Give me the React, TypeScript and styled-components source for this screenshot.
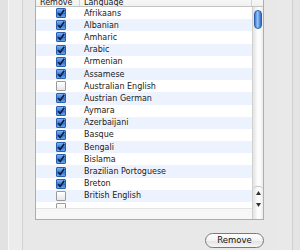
import React from 'react';
import styled, { createGlobalStyle } from 'styled-components';

const GlobalStyle = createGlobalStyle`
  html, body {
    margin: 0;
    padding: 0;
    background: #e8e8e8;
    overflow: hidden;
  }
  body {
    font-family: "DejaVu Sans", "Lucida Grande", sans-serif;
  }
`;

const Window = styled.div`
  width: 300px;
  height: 250px;
  display: flex;
  overflow: hidden;
  background: #e8e8e8;
`;

const LeftFrame = styled.div`
  width: 23px;
  display: flex;
  flex-shrink: 0;
`;

const FrameStrip = styled.div<{ $w: number; $bg: string; $line?: string }>`
  width: ${(p) => p.$w}px;
  background: ${(p) => p.$bg};
  border-right: ${(p) => (p.$line ? `1px solid ${p.$line}` : 'none')};
`;

const Main = styled.div`
  flex: 1;
  display: flex;
  flex-direction: column;
  padding: 0 14px 0 12px;
`;

const ListBox = styled.div`
  margin-top: -8px;
  height: 228px;
  box-sizing: border-box;
  border: 1px solid #9db0cb;
  background: #fff;
  display: flex;
  flex-direction: column;
  overflow: hidden;
`;

const Header = styled.div`
  height: 13px;
  flex-shrink: 0;
  display: flex;
  border-bottom: 1px solid #c4c4c4;
  background: linear-gradient(#ffffff, #f0f0f0);
  font-size: 8px;
  color: #222;
  overflow: hidden;
`;

const HeadCell = styled.div<{ $w?: number }>`
  ${(p) => (p.$w ? `width: ${p.$w}px;` : 'flex: 1;')}
  flex-shrink: 0;
  box-sizing: border-box;
  padding-left: 4px;
  padding-top: 3px;
  line-height: 13px;
  border-right: 1px solid #d4d4d4;
  white-space: nowrap;
  overflow: hidden;
`;

const Corner = styled.div`
  width: 11px;
  flex-shrink: 0;
`;

const Body = styled.div`
  flex: 1;
  display: flex;
  min-height: 0;
`;

const Rows = styled.div`
  flex: 1;
  display: flex;
  flex-direction: column;
`;

const Viewport = styled.div`
  height: 201px;
  flex-shrink: 0;
  display: flex;
  flex-direction: column;
  overflow: hidden;
`;

const Row = styled.div<{ $odd: boolean }>`
  height: 12.2px;
  flex-shrink: 0;
  display: flex;
  align-items: center;
  background: ${(p) => (p.$odd ? '#edf3fe' : '#ffffff')};
`;

const CheckCell = styled.div`
  width: 44px;
  flex-shrink: 0;
  display: flex;
  justify-content: center;
  padding-left: 6px;
  box-sizing: border-box;
`;

const Box = styled.div<{ $on: boolean }>`
  width: 10px;
  height: 10px;
  box-sizing: border-box;
  border-radius: 1px;
  border: 1px solid ${(p) => (p.$on ? '#2a5fb0' : '#9a9a9a')};
  background: ${(p) =>
    p.$on
      ? 'linear-gradient(#7fb2f0, #3a7cd8 50%, #2c6ccc 51%, #6aa6ec)'
      : 'linear-gradient(#ffffff, #e6e6e6)'};
  display: flex;
  align-items: center;
  justify-content: center;
`;

const LangCell = styled.div`
  flex: 1;
  padding-left: 4px;
  font-size: 8px;
  color: #1a1a1a;
  white-space: nowrap;
  overflow: hidden;
`;

const BottomStrip = styled.div`
  flex: 1;
  border-top: 1px solid #e4e4e4;
  background: #f7f7f7;
`;

const ScrollTrack = styled.div`
  width: 11px;
  flex-shrink: 0;
  border-left: 1px solid #d0d0d0;
  box-sizing: border-box;
  background: linear-gradient(90deg, #e2e2e2, #f8f8f8 40%, #ffffff 60%, #ececec);
  display: flex;
  flex-direction: column;
  align-items: center;
  padding-top: 3px;
`;

const Thumb = styled.div`
  width: 8px;
  height: 19px;
  border-radius: 4px;
  border: 1px solid #2d5fa8;
  box-sizing: border-box;
  background: linear-gradient(90deg, #3d7ad6, #9cc6f6 45%, #5c9ae6 70%, #2f6cc8);
`;

const TrackSpace = styled.div`
  flex: 1;
`;

const ArrowBox = styled.div`
  height: 24px;
  width: 100%;
  display: flex;
  flex-direction: column;
  align-items: center;
  justify-content: space-around;
  border-top: 1px solid #c8c8c8;
  border-radius: 4px 4px 0 0;
  margin-bottom: 8px;
`;

const BottomBar = styled.div`
  display: flex;
  justify-content: flex-end;
  padding-top: 13px;
`;

const Button = styled.button`
  width: 59px;
  height: 15px;
  padding: 0;
  border: 1px solid #7a7a7a;
  border-radius: 8px;
  background: linear-gradient(#ffffff, #f2f2f2 50%, #e2e2e2 51%, #f6f6f6);
  font-family: "DejaVu Sans", "Lucida Grande", sans-serif;
  font-size: 8.5px;
  color: #111;
  line-height: 13px;
`;

const RightFrame = styled.div`
  width: 22px;
  display: flex;
  flex-shrink: 0;
`;

const Tick = () => (
  <svg width="8" height="8" viewBox="0 0 8 8">
    <path d="M1.2 4.2 L3.2 6.4 L7.2 0.8" fill="none" stroke="#0c1c3c" strokeWidth="1.6" />
  </svg>
);

const Arrow = ({ up }: { up: boolean }) => (
  <svg width="5" height="4" viewBox="0 0 5 4">
    <path d={up ? 'M2.5 0 L5 4 L0 4 Z' : 'M0 0 L5 0 L2.5 4 Z'} fill="#333" />
  </svg>
);

const languages: [string, boolean][] = [
  ['Afrikaans', true],
  ['Albanian', true],
  ['Amharic', true],
  ['Arabic', true],
  ['Armenian', true],
  ['Assamese', true],
  ['Australian English', false],
  ['Austrian German', true],
  ['Aymara', true],
  ['Azerbaijani', true],
  ['Basque', true],
  ['Bengali', true],
  ['Bislama', true],
  ['Brazilian Portoguese', true],
  ['Breton', true],
  ['British English', false],
  ['', false],
];

const App = () => {
  return (
    <>
      <GlobalStyle />
      <Window>
        <LeftFrame>
          <FrameStrip $w={8} $bg="#e2e2e2" $line="#f7f7f7" />
          <FrameStrip $w={13} $bg="#ececec" $line="#d2d2d2" />
        </LeftFrame>
        <Main>
          <ListBox>
            <Header>
              <HeadCell $w={44}>Remove</HeadCell>
              <HeadCell>Language</HeadCell>
              <Corner />
            </Header>
            <Body>
              <Rows>
                <Viewport>
                  {languages.map(([name, on], i) => (
                    <Row key={i} $odd={i % 2 === 1}>
                      <CheckCell>
                        <Box $on={on}>{on && <Tick />}</Box>
                      </CheckCell>
                      <LangCell>{name}</LangCell>
                    </Row>
                  ))}
                </Viewport>
                <BottomStrip />
              </Rows>
              <ScrollTrack>
                <Thumb />
                <TrackSpace />
                <ArrowBox>
                  <Arrow up />
                  <Arrow up={false} />
                </ArrowBox>
              </ScrollTrack>
            </Body>
          </ListBox>
          <BottomBar>
            <Button>Remove</Button>
          </BottomBar>
        </Main>
        <RightFrame>
          <FrameStrip $w={14} $bg="#e9e9e9" $line="#cfcfcf" />
          <FrameStrip $w={7} $bg="#e4e4e4" />
        </RightFrame>
      </Window>
    </>
  );
};

export default App;
